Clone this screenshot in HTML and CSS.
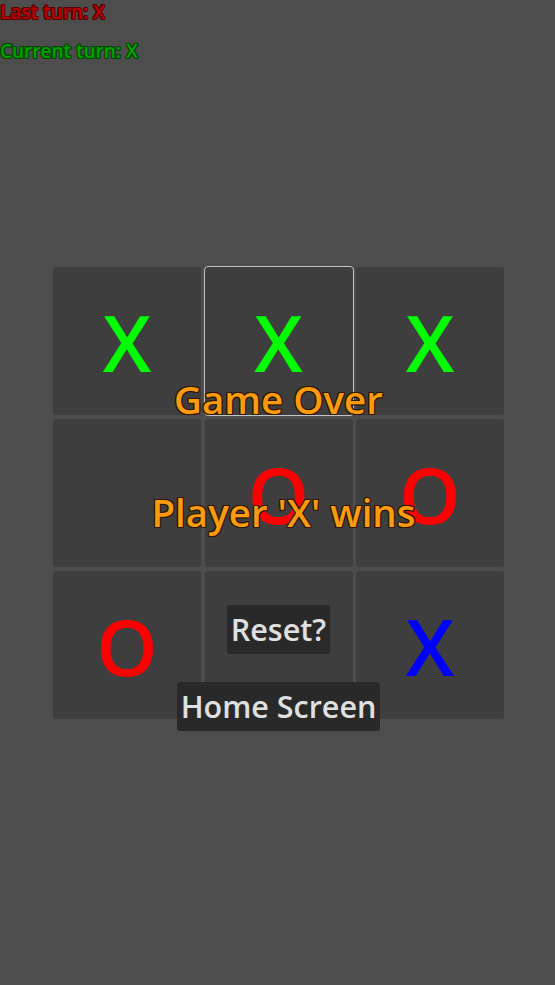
FILE: index.html
```html
<!DOCTYPE html>
<html>
<head>
<meta charset="utf-8">
<link rel="stylesheet" href="styles.css">
</head>
<body>
<div class="page">
  <div class="hud">
    <div class="label last">Last turn: X</div>
    <div class="label current">Current turn: X</div>
  </div>
  <div class="board">
    <div class="grid">
      <div class="cell"><span class="mark x-green">X</span></div>
      <div class="cell focused"><span class="mark x-green">X</span></div>
      <div class="cell"><span class="mark x-green">X</span></div>
      <div class="cell"></div>
      <div class="cell"><span class="mark o-red">O</span></div>
      <div class="cell"><span class="mark o-red">O</span></div>
      <div class="cell"><span class="mark o-red">O</span></div>
      <div class="cell"></div>
      <div class="cell"><span class="mark x-blue">X</span></div>
    </div>
    <div class="overlay">
      <div class="title">Game Over</div>
      <div class="title winner">Player 'X' wins</div>
      <div class="btn reset">Reset?</div>
      <div class="btn home">Home Screen</div>
    </div>
  </div>
</div>
</body>
</html>
```
FILE: styles.css
```css
html, body {
  margin: 0;
  padding: 0;
  background: #4d4d4d;
}
.page {
  width: 555px;
  height: 985px;
  background: #4d4d4d;
  font-family: "Open Sans", "Noto Sans", sans-serif;
  font-weight: 600;
  overflow: hidden;
}
.hud {
  display: flex;
  flex-direction: column;
  gap: 14px;
  padding-top: 0;
}
.label {
  font-size: 19px;
  line-height: 25px;
}
.last {
  color: #b80000;
  text-shadow: 1px 0 #5a0000, -1px 0 #5a0000, 0 1px #5a0000, 0 -1px #5a0000,
    1px 1px #5a0000, -1px -1px #5a0000, 1px -1px #5a0000, -1px 1px #5a0000;
}
.current {
  color: #00a000;
  text-shadow: 1px 0 #004800, -1px 0 #004800, 0 1px #004800, 0 -1px #004800,
    1px 1px #004800, -1px -1px #004800, 1px -1px #004800, -1px 1px #004800;
}
.board {
  position: relative;
  margin: 203px 0 0 53px;
  width: 451px;
}
.grid {
  display: grid;
  grid-template-columns: repeat(3, 148px);
  grid-template-rows: repeat(3, 148px);
  column-gap: 3.5px;
  row-gap: 4px;
}
.cell {
  background: #3e3e3e;
  border-radius: 3px;
  display: flex;
  align-items: center;
  justify-content: center;
}
.cell.focused {
  outline: 1px solid #c4c4c4;
  outline-offset: 0;
}
.mark {
  font-family: "Open Sans", sans-serif;
  font-weight: 600;
  font-size: 78px;
  line-height: 1;
  margin-top: 2px;
}
.x-green { color: #00ff00; }
.o-red { color: #ff0000; }
.x-blue { color: #0000ff; }
.overlay {
  position: absolute;
  left: 0;
  right: 0;
  top: 113px;
  display: flex;
  flex-direction: column;
  align-items: center;
}
.title {
  font-size: 38.5px;
  line-height: 38.5px;
  color: #ff9a0c;
  text-shadow: 1px 0 #2b1800, -1px 0 #2b1800, 0 1px #2b1800, 0 -1px #2b1800,
    1px 1px #2b1800, -1px -1px #2b1800, 1px -1px #2b1800, -1px 1px #2b1800;
}
.winner {
  margin-top: 74.5px;
  margin-left: 10px;
}
.btn {
  height: 49px;
  line-height: 49px;
  padding: 0 4px;
  font-size: 30.5px;
  color: #e0e0e0;
  background: #292929;
  border-radius: 3px;
}
.reset {
  margin-top: 73.5px;
}
.home {
  margin-top: 28px;
}
```
